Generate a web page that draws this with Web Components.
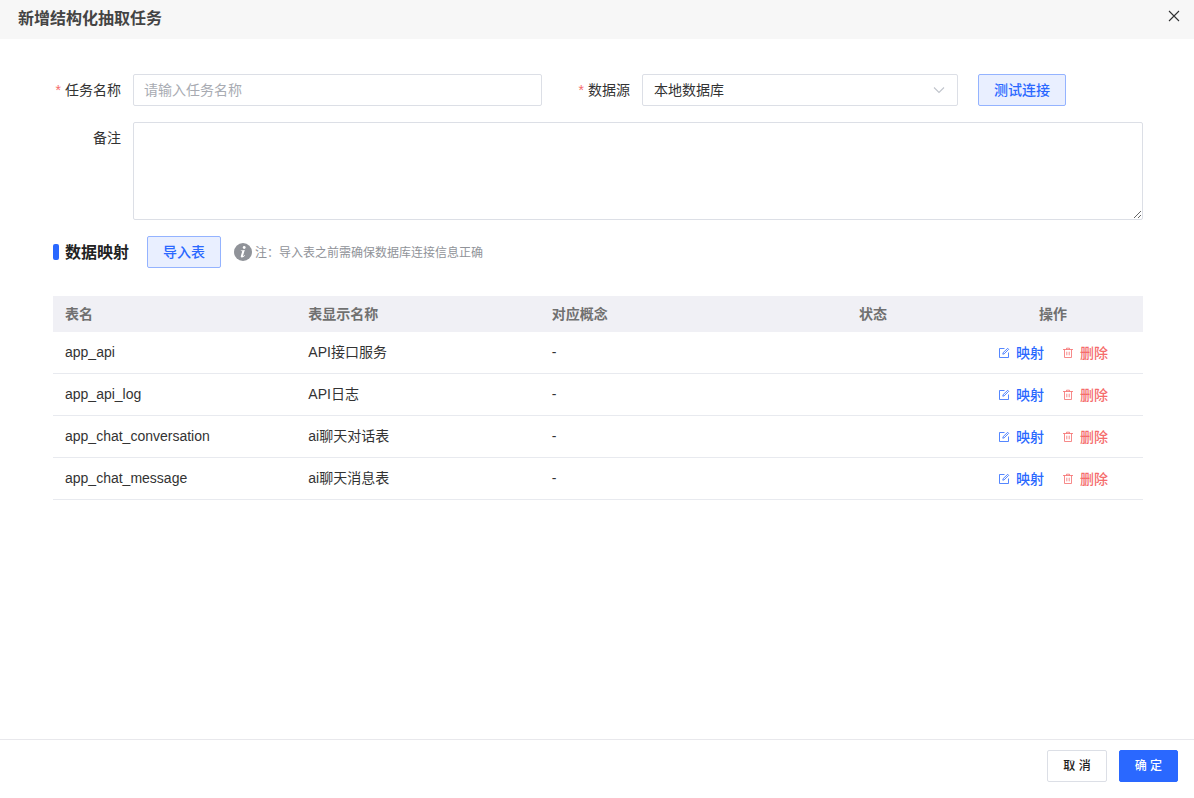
<!DOCTYPE html>
<html lang="zh-CN">
<head>
<meta charset="utf-8">
<meta name="viewport" content="width=device-width, initial-scale=1">
<title>新增结构化抽取任务</title>
<style>
  body {
    margin: 0;
    font: 14px/20px "Liberation Sans", "Noto Sans CJK SC", sans-serif;
    color: #333;
    background: #fff;
    --primary: #2a68ff;
    --primary-border: #94b3ff;
    --primary-soft: #e9efff;
    --danger: #f56c6c;
    --border: #dcdfe6;
    --muted: #909399;
  }
  .basic { display: flex; align-items: flex-start; }
  .basic .name { flex: 489 1 0; }
  .basic .source { flex: 396 1 0; margin-left: 20px; }
  .basic ui-button { margin-left: 20px; }
  .basic::after { content: ""; flex: 77 1 0; }
  .remark { margin-top: 16px; }
  section-heading { margin: 16px 0 28px; }
</style>
</head>
<body>
<task-dialog>
  <span slot="title">新增结构化抽取任务</span>
  <div class="basic">
    <text-field class="name" label="任务名称" placeholder="请输入任务名称" required></text-field>
    <select-field class="source" label="数据源" value="本地数据库" required></select-field>
    <ui-button kind="soft">测试连接</ui-button>
  </div>
  <textarea-field class="remark" label="备注"></textarea-field>
  <section-heading>
    数据映射
    <ui-button slot="action" kind="soft">导入表</ui-button>
    <info-note slot="note">注：导入表之前需确保数据库连接信息正确</info-note>
  </section-heading>
  <mapping-table></mapping-table>
  <ui-button slot="footer" kind="plain" small>取 消</ui-button>
  <ui-button slot="footer" kind="primary" small>确 定</ui-button>
</task-dialog>

<script>
const define = (name, render) => customElements.define(name, class extends HTMLElement {
  connectedCallback() {
    if (this.shadowRoot) return;
    this.attachShadow({ mode: 'open' }).innerHTML =
      '<style>*{box-sizing:border-box}</style>' + render(this);
  }
});

define('task-dialog', () => `
  <style>
    :host { display: flex; flex-direction: column; min-height: 100vh; }
    header { display: flex; justify-content: space-between; align-items: flex-start; background: #f7f7f7; padding: 7px 10px 8px 18px; }
    h1 { margin: 0; font-size: 16px; line-height: 24px; font-weight: 700; color: #444; }
    button { display: flex; padding: 3px 4px; margin: 0; border: 0; background: none; color: #303133; }
    main { flex: 1; padding: 35px 51px 24px 53px; }
    footer { display: flex; justify-content: flex-end; gap: 12px; border-top: 1px solid #e8e8ec; padding: 10px 16px 16px; }
  </style>
  <header>
    <h1><slot name="title"></slot></h1>
    <button type="button" aria-label="关闭"><svg width="12" height="12" viewBox="0 0 12 12" fill="none" stroke="currentColor" stroke-width="1.1"><path d="M1 1l10 10M11 1L1 11"/></svg></button>
  </header>
  <main><slot></slot></main>
  <footer><slot name="footer"></slot></footer>`);

define('ui-button', () => `
  <style>
    :host { display: block; flex: none; }
    button { display: block; height: 32px; margin: 0; padding: 0 15px; border: 1px solid; border-radius: 2px; font: 500 14px/20px "Liberation Sans", "Noto Sans CJK SC", sans-serif; white-space: nowrap; }
    :host([small]) button { font-size: 12px; }
    :host([kind=soft]) button { color: var(--primary); background: var(--primary-soft); border-color: var(--primary-border); }
    :host([kind=plain]) button { color: #222; background: #fff; border-color: var(--border); }
    :host([kind=primary]) button { color: #fff; background: var(--primary); border-color: var(--primary); }
  </style>
  <button type="button"><slot></slot></button>`);

const fieldStyle = `
  <style>
    :host { display: flex; min-width: 0; }
    label { flex: none; width: 80px; padding-right: 12px; line-height: 32px; text-align: right; color: #333; white-space: nowrap; }
    label i { color: var(--danger); font-style: normal; margin-right: 4px; }
    .box { flex: 1; min-width: 0; display: flex; position: relative; }
    input, select, textarea { display: block; width: 100%; margin: 0; border: 1px solid var(--border); border-radius: 2px; background: #fff; color: #333; font: inherit; outline: 0; }
    input, select { height: 32px; padding: 0 11px; }
    input { padding: 0 10px; }
    input::placeholder { color: #a8abb2; opacity: 1; }
    select { appearance: none; }
    textarea { height: 98px; padding: 5px 11px; resize: vertical; }
    svg { position: absolute; right: 13px; top: 10px; pointer-events: none; }
  </style>`;
const label = el => `<label for="control">${el.hasAttribute('required') ? '<i>*</i>' : ''}${el.getAttribute('label')}</label>`;

define('text-field', el => `${fieldStyle}${label(el)}
  <div class="box"><input id="control" type="text" placeholder="${el.getAttribute('placeholder')}"></div>`);

define('select-field', el => `${fieldStyle}${label(el)}
  <div class="box"><select id="control"><option>${el.getAttribute('value')}</option></select>
  <svg width="12" height="12" viewBox="0 0 12 12" fill="none" stroke="#c0c4cc" stroke-width="1.1"><path d="M1 3.5l5 5 5-5"/></svg></div>`);

define('textarea-field', el => `${fieldStyle}${label(el)}
  <div class="box"><textarea id="control"></textarea></div>`);

define('section-heading', () => `
  <style>
    :host { display: flex; align-items: center; }
    h2 { display: flex; align-items: center; gap: 6px; margin: 0 18px 0 0; font-size: 16px; line-height: 24px; font-weight: 700; color: #222; }
    h2::before { content: ""; width: 6px; height: 16px; border-radius: 2px; background: var(--primary); }
    h2 span { padding-top: 2px; line-height: 22px; }
    slot[name=note] { display: block; margin-left: 13px; }
  </style>
  <h2><span><slot></slot></span></h2><slot name="action"></slot><slot name="note"></slot>`);

define('info-note', () => `
  <style>
    :host { display: flex; align-items: center; gap: 3px; font-size: 12px; line-height: 18px; color: var(--muted); }
    svg { flex: none; }
    span { padding-top: 2px; }
  </style>
  <svg width="18" height="18" viewBox="0 0 18 18"><circle cx="9" cy="9" r="9" fill="#909399"/><circle cx="10.2" cy="4.5" r="1.4" fill="#fff"/><path d="M6.8 7.5l4-.6-1.7 5.7c-.2.8.3.7 1.5-.5l.4.4c-1.1 1.4-2.2 2-3.2 1.9-1-.1-1.2-.8-.9-1.7l1.2-4c.2-.6 0-.7-1.3-.8z" fill="#fff"/></svg>
  <span><slot></slot></span>`);

define('row-action', () => `
  <style>
    :host { display: block; }
    button { display: flex; align-items: center; gap: 6px; margin: 0; padding: 0; border: 0; background: none; color: var(--primary); font: 500 14px/20px "Liberation Sans", "Noto Sans CJK SC", sans-serif; }
    :host([kind=delete]) button { color: var(--danger); }
    .delete, :host([kind=delete]) .edit { display: none; }
    :host([kind=delete]) .delete { display: block; }
  </style>
  <button type="button">
    <svg class="edit" width="12" height="12" viewBox="0 0 12 12" fill="none" stroke="currentColor" stroke-width=".8"><path d="M6.5 1.5h-5v9h9v-5M4.8 7.2l.3-1.5 4.6-4.4 1 1-4.6 4.6z"/></svg>
    <svg class="delete" width="12" height="12" viewBox="0 0 12 12" fill="none" stroke="currentColor" stroke-width=".8"><path d="M1 2.5h10M4.5 2.5v-1.3h3v1.3M2.5 2.5v8h7v-8M4.8 4.7v3.6M7.2 4.7v3.6"/></svg>
    <slot></slot>
  </button>`);

const rows = [
  ['app_api', 'API接口服务'],
  ['app_api_log', 'API日志'],
  ['app_chat_conversation', 'ai聊天对话表'],
  ['app_chat_message', 'ai聊天消息表'],
];
define('mapping-table', () => `
  <style>
    :host { display: block; }
    table { width: 100%; table-layout: fixed; border-collapse: separate; border-spacing: 0; }
    .narrow { width: 180px; }
    th, td { padding: 0 12px; text-align: left; }
    th { height: 36px; background: #f0f0f5; color: #707070; font-weight: 700; }
    td { height: 42px; padding-bottom: 2px; border-bottom: 1px solid #e8eaef; color: #333; }
    .center { text-align: center; }
    .actions { display: flex; justify-content: center; gap: 18px; padding-top: 2px; }
  </style>
  <table>
    <colgroup><col><col><col><col class="narrow"><col class="narrow"></colgroup>
    <thead><tr><th>表名</th><th>表显示名称</th><th>对应概念</th><th class="center">状态</th><th class="center">操作</th></tr></thead>
    <tbody>${rows.map(([name, title]) => `
      <tr><td>${name}</td><td>${title}</td><td>-</td><td></td>
      <td><div class="actions"><row-action>映射</row-action><row-action kind="delete">删除</row-action></div></td></tr>`).join('')}
    </tbody>
  </table>`);
</script>
</body>
</html>
